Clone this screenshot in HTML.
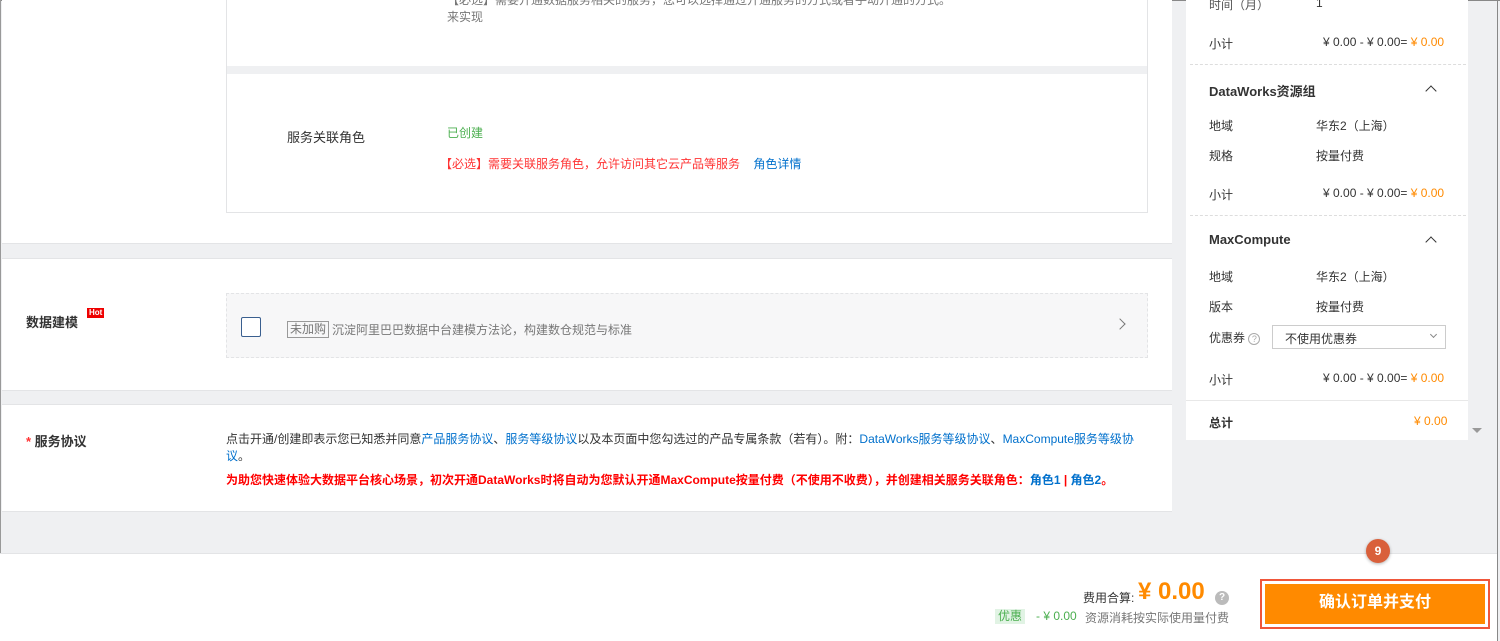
<!DOCTYPE html>
<html><head><meta charset="utf-8"><style>
*{margin:0;padding:0;box-sizing:border-box}
body{width:1500px;height:641px;overflow:hidden;background:#eff0f2;font-family:"Liberation Sans","Noto Sans CJK SC",sans-serif;font-size:12px;color:#333;position:relative}
.a{position:absolute}
.w{background:#fff}
.o{color:#ff8a00}
.b{color:#0070cc}
.r{color:#f00}
</style></head><body>
<div class="a" style="left:0;top:0;width:1500px;height:1px;background:#888"></div>
<div class="a" style="left:0;top:0;width:1px;height:641px;background:#999"></div>
<div class="a" style="right:2px;top:0;width:1px;height:641px;background:#888"></div>

<div class="a w" style="left:2px;top:0;width:1170px;height:244px;border-bottom:1px solid #e3e4e6"></div>
<div class="a" style="left:226px;top:0;width:922px;height:213px;border:1px solid #e3e4e6;border-top:none;background:#fff"></div>
<div class="a" style="left:227px;top:66px;width:920px;height:8px;background:#eff0f2"></div>
<div class="a" style="left:447px;top:-9px;color:#777">【必选】需要开通数据服务相关的服务，您可以选择通过开通服务的方式或者手动开通的方式。</div>
<div class="a" style="left:447px;top:8px;color:#777">来实现</div>
<div class="a" style="left:287px;top:127px;font-size:13px">服务关联角色</div>
<div class="a" style="left:447px;top:124px;color:#4caf50">已创建</div>
<div class="a" style="left:440px;top:155px;color:#f33">【必选】需要关联服务角色，允许访问其它云产品等服务 <span class="b" style="margin-left:10px">角色详情</span></div>

<div class="a w" style="left:2px;top:258px;width:1170px;height:133px;border-top:1px solid #e3e4e6;border-bottom:1px solid #e3e4e6"></div>
<div class="a" style="left:26px;top:312px;font-size:13px;font-weight:bold">数据建模</div>
<div class="a" style="left:87px;top:308px;background:#e00;color:#fff;font-size:8px;font-weight:bold;padding:0 2px;line-height:10px">Hot</div>
<div class="a" style="left:226px;top:293px;width:922px;height:65px;border:1px dashed #e3e4e6;background:#f7f7f8"></div>
<div class="a" style="left:241px;top:317px;width:20px;height:20px;border:1px solid #3a5f8f;border-radius:2px;background:#fff"></div>
<div class="a" style="left:287px;top:321px;border:1px solid #999;color:#777;padding:0 2px;line-height:15px">未加购</div>
<div class="a" style="left:332px;top:321px;color:#777">沉淀阿里巴巴数据中台建模方法论，构建数仓规范与标准</div>
<div class="a" style="left:1116px;top:320px;width:8px;height:8px;border-right:1.5px solid #777;border-top:1.5px solid #777;transform:rotate(45deg)"></div>

<div class="a w" style="left:2px;top:404px;width:1170px;height:108px;border-top:1px solid #e3e4e6;border-bottom:1px solid #e3e4e6"></div>
<div class="a" style="left:26px;top:431px;font-size:13px;font-weight:bold"><span style="color:#f33">*</span> 服务协议</div>
<div class="a" style="left:226px;top:431px;width:920px;line-height:17px">点击开通/创建即表示您已知悉并同意<span class="b">产品服务协议</span>、<span class="b">服务等级协议</span>以及本页面中您勾选过的产品专属条款（若有）。附：<span class="b">DataWorks服务等级协议</span>、<span class="b">MaxCompute服务等级协议</span>。</div>
<div class="a r" style="left:226px;top:471px;font-weight:bold">为助您快速体验大数据平台核心场景，初次开通DataWorks时将自动为您默认开通MaxCompute按量付费（不使用不收费），并创建相关服务关联角色：<span class="b">角色1</span> | <span class="b">角色2</span>。</div>

<div class="a w" style="left:1186px;top:0;width:282px;height:440px"></div>
<div class="a" style="left:1209px;top:-4px;color:#555">时间（月）</div><div class="a" style="left:1316px;top:-4px">1</div>
<div class="a" style="left:1209px;top:35px">小计</div><div class="a" style="left:1323px;top:35px">¥ 0.00 - ¥ 0.00= <span class="o">¥ 0.00</span></div>
<div class="a" style="left:1190px;top:64px;width:276px;border-top:1px dashed #ddd"></div>
<div class="a" style="left:1209px;top:81px;font-size:13px;font-weight:bold">DataWorks资源组</div>
<div class="a" style="left:1427px;top:87px;width:8px;height:8px;border-left:1.5px solid #333;border-top:1.5px solid #333;transform:rotate(45deg)"></div>
<div class="a" style="left:1209px;top:117px">地域</div><div class="a" style="left:1316px;top:117px">华东2（上海）</div>
<div class="a" style="left:1209px;top:147px">规格</div><div class="a" style="left:1316px;top:147px">按量付费</div>
<div class="a" style="left:1209px;top:186px">小计</div><div class="a" style="left:1323px;top:186px">¥ 0.00 - ¥ 0.00= <span class="o">¥ 0.00</span></div>
<div class="a" style="left:1190px;top:215px;width:276px;border-top:1px dashed #ddd"></div>
<div class="a" style="left:1209px;top:232px;font-size:13px;font-weight:bold">MaxCompute</div>
<div class="a" style="left:1427px;top:238px;width:8px;height:8px;border-left:1.5px solid #333;border-top:1.5px solid #333;transform:rotate(45deg)"></div>
<div class="a" style="left:1209px;top:268px">地域</div><div class="a" style="left:1316px;top:268px">华东2（上海）</div>
<div class="a" style="left:1209px;top:298px">版本</div><div class="a" style="left:1316px;top:298px">按量付费</div>
<div class="a" style="left:1209px;top:329px">优惠券 <span style="display:inline-block;width:12px;height:12px;border:1px solid #aaa;border-radius:50%;font-size:9px;line-height:10px;text-align:center;color:#aaa">?</span></div>
<div class="a" style="left:1272px;top:325px;width:174px;height:24px;border:1px solid #ccc;padding:4px 12px">不使用优惠券</div>
<div class="a" style="left:1431px;top:332px;width:5px;height:5px;border-right:1px solid #888;border-bottom:1px solid #888;transform:rotate(45deg)"></div>
<div class="a" style="left:1209px;top:371px">小计</div><div class="a" style="left:1323px;top:371px">¥ 0.00 - ¥ 0.00= <span class="o">¥ 0.00</span></div>
<div class="a" style="left:1186px;top:400px;width:282px;border-top:1px solid #e8e8e8"></div>
<div class="a" style="left:1209px;top:414px;font-weight:bold">总计</div><div class="a o" style="left:1414px;top:414px">¥ 0.00</div>
<div class="a" style="left:1472px;top:428px;border:5px solid transparent;border-top:5px solid #999"></div>

<div class="a w" style="left:0;top:553px;width:1497px;height:88px;border-top:1px solid #e3e4e6"></div>
<div class="a" style="left:1366px;top:539px;width:24px;height:24px;border-radius:50%;background:#d9603b;color:#fff;font-weight:bold;text-align:center;line-height:24px;box-shadow:0 1px 3px rgba(0,0,0,.3)">9</div>
<div class="a" style="left:1083px;top:589px">费用合算:</div>
<div class="a o" style="left:1138px;top:578px;font-size:24px;font-weight:bold">¥ 0.00</div>
<div class="a" style="left:1215px;top:591px;width:14px;height:14px;border-radius:50%;background:#bbb;color:#fff;font-size:10px;font-weight:bold;text-align:center;line-height:14px">?</div>
<div class="a" style="left:995px;top:609px;background:#e1f3e4;color:#4caf50;padding:0 3px;line-height:15px">优惠</div>
<div class="a" style="left:1036px;top:609px;color:#4caf50">- ¥ 0.00</div>
<div class="a" style="left:1085px;top:609px;color:#777">资源消耗按实际使用量付费</div>
<div class="a" style="left:1260px;top:579px;width:230px;height:50px;border:2px solid #f0563a;padding:3px"><div style="background:#ff8a00;height:100%;color:#fff;font-size:16px;font-weight:bold;text-align:center;line-height:38px">确认订单并支付</div></div>
</body></html>
